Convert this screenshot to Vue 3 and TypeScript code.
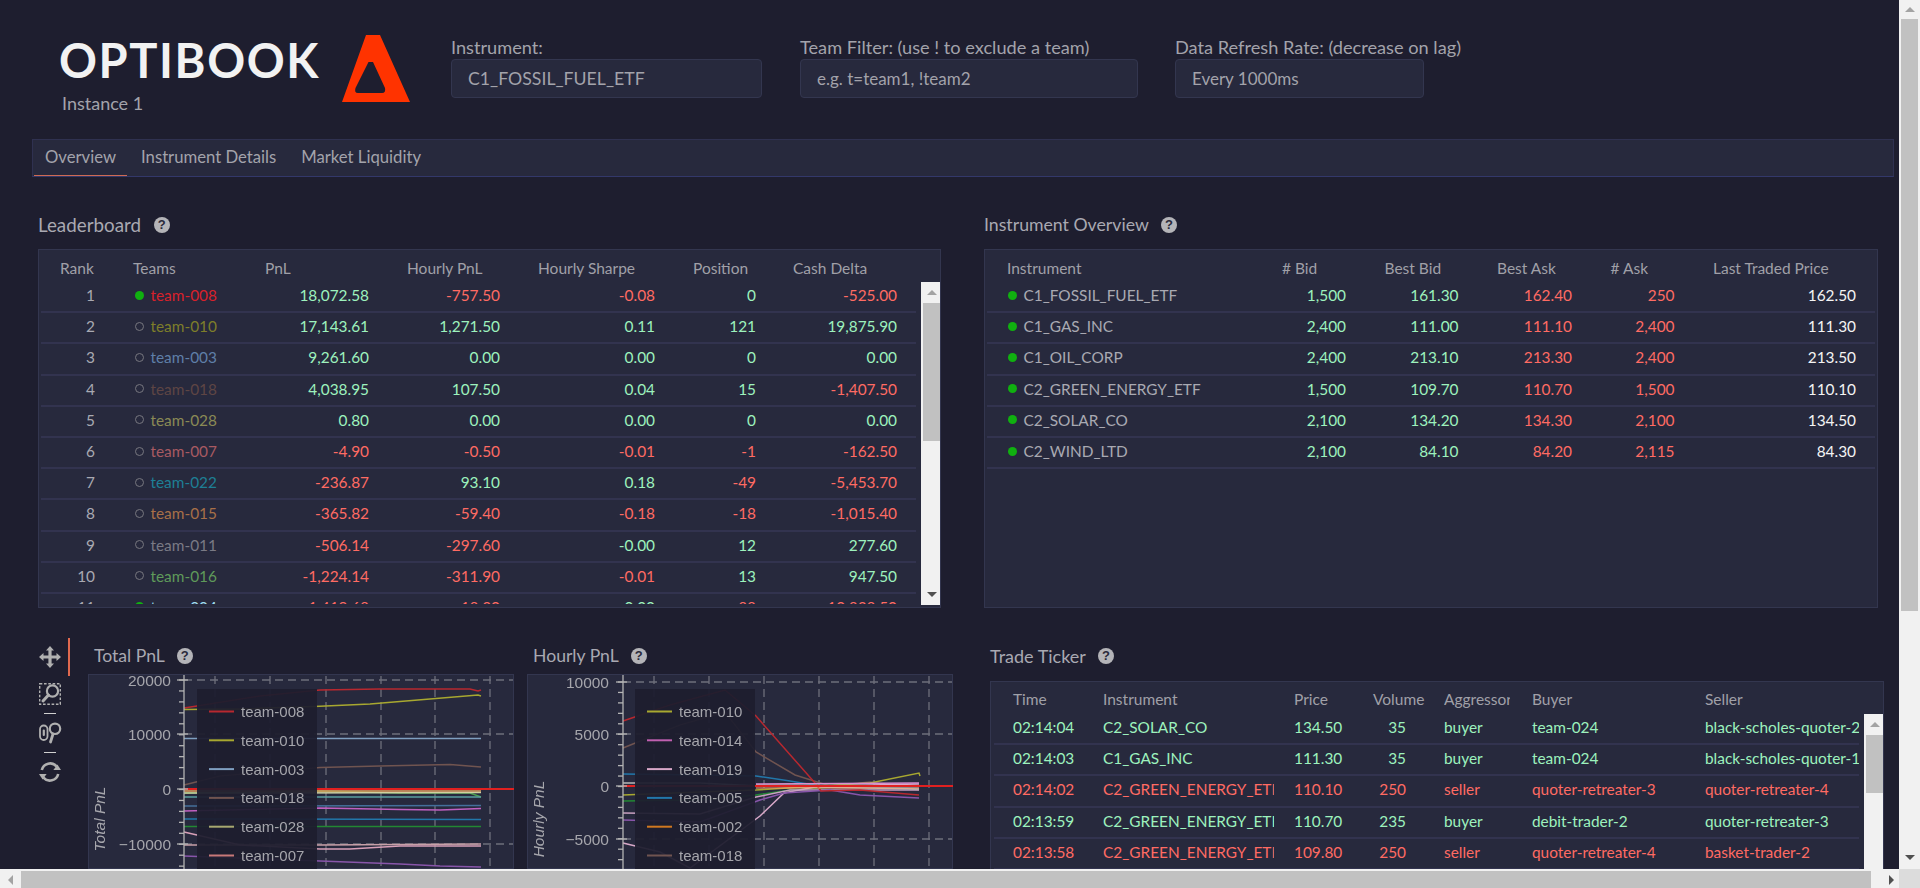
<script setup lang="ts">
interface Series { c: string; p: string; w?: number }
interface Chart {
  title: string; axis: string; x0: number; axisX: number; endX: number; labelX: number;
  ticks: { y: number; t: string }[]; minorStep: number; minorStart: number;
  vx: number[]; legendX: number; legend: { c: string; t: string }[]; series: Series[];
}

const isNeg = (v: string) => parseFloat(v.replace(/,/g, '')) < 0
const tone = (v: string) => (isNeg(v) ? 'neg' : 'pos')

const teams = [
  { r: 1, t: 'team-008', c: '#d8212b', on: true, v: ['18,072.58', '-757.50', '-0.08', '0', '-525.00'] },
  { r: 2, t: 'team-010', c: '#7e7e2a', on: false, v: ['17,143.61', '1,271.50', '0.11', '121', '19,875.90'] },
  { r: 3, t: 'team-003', c: '#5f7fa8', on: false, v: ['9,261.60', '0.00', '0.00', '0', '0.00'] },
  { r: 4, t: 'team-018', c: '#5e4544', on: false, v: ['4,038.95', '107.50', '0.04', '15', '-1,407.50'] },
  { r: 5, t: 'team-028', c: '#8a8a55', on: false, v: ['0.80', '0.00', '0.00', '0', '0.00'] },
  { r: 6, t: 'team-007', c: '#a85a62', on: false, v: ['-4.90', '-0.50', '-0.01', '-1', '-162.50'] },
  { r: 7, t: 'team-022', c: '#1e7f95', on: false, v: ['-236.87', '93.10', '0.18', '-49', '-5,453.70'] },
  { r: 8, t: 'team-015', c: '#a87048', on: false, v: ['-365.82', '-59.40', '-0.18', '-18', '-1,015.40'] },
  { r: 9, t: 'team-011', c: '#7a7a85', on: false, v: ['-506.14', '-297.60', '-0.00', '12', '277.60'] },
  { r: 10, t: 'team-016', c: '#5f9a5a', on: false, v: ['-1,224.14', '-311.90', '-0.01', '13', '947.50'] },
  { r: 11, t: 'team-004', c: '#9fdcf0', on: true, v: ['-1,419.68', '-18.30', '0.00', '-88', '-10,838.50'] },
]
const leaderHead = ['Rank', 'Teams', 'PnL', 'Hourly PnL', 'Hourly Sharpe', 'Position', 'Cash Delta']

const instruments = [
  ['C1_FOSSIL_FUEL_ETF', '1,500', '161.30', '162.40', '250', '162.50'],
  ['C1_GAS_INC', '2,400', '111.00', '111.10', '2,400', '111.30'],
  ['C1_OIL_CORP', '2,400', '213.10', '213.30', '2,400', '213.50'],
  ['C2_GREEN_ENERGY_ETF', '1,500', '109.70', '110.70', '1,500', '110.10'],
  ['C2_SOLAR_CO', '2,100', '134.20', '134.30', '2,100', '134.50'],
  ['C2_WIND_LTD', '2,100', '84.10', '84.20', '2,115', '84.30'],
]
const overviewHead = ['Instrument', '# Bid', 'Best Bid', 'Best Ask', '# Ask', 'Last Traded Price']

const trades = [
  ['02:14:04', 'C2_SOLAR_CO', '134.50', '35', 'buyer', 'team-024', 'black-scholes-quoter-2'],
  ['02:14:03', 'C1_GAS_INC', '111.30', '35', 'buyer', 'team-024', 'black-scholes-quoter-1'],
  ['02:14:02', 'C2_GREEN_ENERGY_ETF', '110.10', '250', 'seller', 'quoter-retreater-3', 'quoter-retreater-4'],
  ['02:13:59', 'C2_GREEN_ENERGY_ETF', '110.70', '235', 'buyer', 'debit-trader-2', 'quoter-retreater-3'],
  ['02:13:58', 'C2_GREEN_ENERGY_ETF', '109.80', '250', 'seller', 'quoter-retreater-4', 'basket-trader-2'],
]
const tradeHead = ['Time', 'Instrument', 'Price', 'Volume', 'Aggressor', 'Buyer', 'Seller']

const charts: Chart[] = [
  {
    title: 'Total PnL', axis: 'Total PnL', x0: 88, axisX: 184, endX: 514, labelX: 171,
    ticks: [{ y: 680, t: '20000' }, { y: 734, t: '10000' }, { y: 789, t: '0' }, { y: 844, t: '\u221210000' }],
    minorStep: 10.95, minorStart: 680,
    vx: [215, 270, 326, 381, 435, 490], legendX: 197,
    legend: [
      { c: '#b8282f', t: 'team-008' }, { c: '#a8a830', t: 'team-010' }, { c: '#7f9fc0', t: 'team-003' },
      { c: '#705450', t: 'team-018' }, { c: '#a8a870', t: 'team-028' }, { c: '#c87878', t: 'team-007' },
    ],
    series: [
      { c: '#b8282f', p: '184,708 197,706 260,696 320,690 380,689 470,689 478,691 481,690' },
      { c: '#a8a830', p: '184,709.5 240,709 320,706.3 370,704 430,699 478,695 481,696' },
      { c: '#7f9fc0', p: '184,738.5 481,738.5' },
      { c: '#705450', p: '184,785 220,776 320,767.6 380,766 450,764.5 481,767' },
      { c: '#4da050', p: '184,793 320,791 400,793 470,793 481,797' },
      { c: '#5aa0a0', p: '184,797 481,797' },
      { c: '#e8a060', p: '184,791 481,791' },
      { c: '#d0d0a0', p: '184,793 481,792.5' },
      { c: '#e02020', p: '184,789 514,789', w: 2.2 },
      { c: '#446f9a', p: '184,806 481,805.5' },
      { c: '#c060c0', p: '184,811 320,808 400,809.5 440,810 481,808.5' },
      { c: '#2277aa', p: '184,819 481,819.5' },
      { c: '#228833', p: '184,826.5 481,826.5' },
      { c: '#c8a0a8', p: '184,845 320,845 481,844' },
      { c: '#d8a0b8', p: '184,832 240,845 320,849 350,849 400,846 481,846' },
      { c: '#8855aa', p: '184,856 320,861 400,864 440,866 481,867' },
    ],
  },
  {
    title: 'Hourly PnL', axis: 'Hourly PnL', x0: 527, axisX: 623, endX: 953, labelX: 609,
    ticks: [{ y: 682, t: '10000' }, { y: 734, t: '5000' }, { y: 786, t: '0' }, { y: 839, t: '\u22125000' }],
    minorStep: 10.45, minorStart: 682,
    vx: [654, 709, 764, 819, 874, 929], legendX: 635,
    legend: [
      { c: '#a8a830', t: 'team-010' }, { c: '#c060b0', t: 'team-014' }, { c: '#d8a8c8', t: 'team-019' },
      { c: '#2277aa', t: 'team-005' }, { c: '#d07820', t: 'team-002' }, { c: '#705450', t: 'team-018' },
    ],
    series: [
      { c: '#705450', p: '623,748 680,725 725,712 756,752 795,775 830,786 870,782 919,790' },
      { c: '#2277aa', p: '623,774 700,775 756,776 790,781 820,786 919,788' },
      { c: '#a8a830', p: '623,795 700,792 756,790 820,786 870,783 919,773 920,776' },
      { c: '#228833', p: '623,801 700,800 756,795 790,790 850,786 919,786' },
      { c: '#d8a8c8', p: '623,843 660,852 690,868 760,816 784,793 820,786 919,784' },
      { c: '#c8a0c0', p: '623,813 700,814 756,797 790,790 919,790' },
      { c: '#8855aa', p: '623,820 700,822 760,800 784,793 830,790 860,795 919,798' },
      { c: '#b8b8b8', p: '623,783 700,783 760,786 919,789' },
      { c: '#b8282f', p: '623,721 670,705 725,690 756,716 815,783 821,791 860,790 919,795' },
      { c: '#7ec88a', p: '756,785 919,786' },
      { c: '#d890d0', p: '756,784 919,783' },
      { c: '#ffa070', p: '756,788 919,788', w: 1.2 },
      { c: '#e02020', p: '623,786 953,786', w: 2.2 },
    ],
  },
]

const minors = (c: Chart) => {
  const out: number[] = []
  for (let y = c.minorStart; y < 869; y += c.minorStep) out.push(y)
  return out
}
</script>

<template>
  <div class="page">
    <header class="top">
      <div class="brand">
        <div class="brand-text">
          <div class="logo-word">OPTIBOOK</div>
          <div class="instance">Instance 1</div>
        </div>
        <svg class="logo-mark" width="68" height="68" viewBox="0 0 68 68">
          <path fill="#ff3300" fill-rule="evenodd" d="M24 0 H38 L68 67 H0 Z M26.5 27 L13.5 53 Q12 58 16 58 H40 Q44 58 43 53 L31 27 Z" />
        </svg>
      </div>
      <div class="field f1">
        <div class="field-label">Instrument:</div>
        <div class="field-input wide">C1_FOSSIL_FUEL_ETF</div>
      </div>
      <div class="field f2">
        <div class="field-label">Team Filter: (use ! to exclude a team)</div>
        <div class="field-input">e.g. t=team1, !team2</div>
      </div>
      <div class="field f3">
        <div class="field-label">Data Refresh Rate: (decrease on lag)</div>
        <div class="field-input">Every 1000ms</div>
      </div>
    </header>

    <nav class="tabs">
      <div class="tab active">Overview</div>
      <div class="tab">Instrument Details</div>
      <div class="tab">Market Liquidity</div>
    </nav>

    <section class="row-one">
      <div class="block leader-block">
        <h2 class="block-title leader-title">Leaderboard <span class="help">?</span></h2>
        <div class="panel">
          <div class="grid-row head leader-cols">
            <div v-for="h in leaderHead" :key="h">{{ h }}</div>
          </div>
          <div class="body">
            <div class="rows leader-rows">
              <div v-for="t in teams" :key="t.r" class="grid-row line leader-cols">
                <div class="num muted">{{ t.r }}</div>
                <div class="team">
                  <i class="dot" :class="{ off: !t.on }"></i>
                  <span :style="{ color: t.c }">{{ t.t }}</span>
                </div>
                <div v-for="(v, i) in t.v" :key="i" class="num" :class="tone(v)">{{ v }}</div>
              </div>
            </div>
            <div class="sb">
              <div class="sb-btn"><i class="up"></i></div>
              <div class="sb-thumb leader-thumb"></div>
              <div class="sb-fill"></div>
              <div class="sb-btn"><i class="down"></i></div>
            </div>
          </div>
        </div>
      </div>

      <div class="block overview-block">
        <h2 class="block-title overview-title">Instrument Overview <span class="help">?</span></h2>
        <div class="panel">
          <div class="grid-row head overview-cols">
            <div v-for="h in overviewHead" :key="h">{{ h }}</div>
          </div>
          <div class="rows overview-rows">
            <div v-for="r in instruments" :key="r[0]" class="grid-row line overview-cols">
              <div class="team inst">
                <i class="dot"></i>
                <span class="muted">{{ r[0] }}</span>
              </div>
              <div class="num pos">{{ r[1] }}</div>
              <div class="num pos">{{ r[2] }}</div>
              <div class="num neg">{{ r[3] }}</div>
              <div class="num neg">{{ r[4] }}</div>
              <div class="num last">{{ r[5] }}</div>
            </div>
          </div>
        </div>
      </div>
    </section>

    <section class="row-two">
      <div class="tools">
        <div class="tool active">
          <svg width="22" height="22" viewBox="0 0 22 22"><path fill="#b0b0b0" d="M11 0 L15 4.5 H12.6 V9.4 H17.5 V7 L22 11 L17.5 15 V12.6 H12.6 V17.5 H15 L11 22 L7 17.5 H9.4 V12.6 H4.5 V15 L0 11 L4.5 7 V9.4 H9.4 V4.5 H7 Z" /></svg>
        </div>
        <div class="tool t2">
          <svg width="22" height="22" viewBox="0 0 22 22">
            <rect x="0.7" y="0.7" width="20.6" height="20.6" fill="none" stroke="#b0b0b0" stroke-width="1.4" stroke-dasharray="2.6 1.7" />
            <circle cx="13.5" cy="8" r="5.6" fill="#1e1e2f" stroke="#b0b0b0" stroke-width="2.2" />
            <path d="M9.5 12 L4 18" stroke="#b0b0b0" stroke-width="3" stroke-linecap="round" />
          </svg>
        </div>
        <div class="sep"></div>
        <div class="tool t3">
          <svg width="23" height="22" viewBox="0 0 23 22">
            <rect x="1" y="3.5" width="7.5" height="14.5" rx="3.7" fill="none" stroke="#b0b0b0" stroke-width="1.8" />
            <rect x="3.7" y="7.5" width="2.2" height="6.5" rx="1" fill="#b0b0b0" />
            <circle cx="16" cy="6.8" r="5.2" fill="none" stroke="#b0b0b0" stroke-width="2.2" />
            <path d="M14 12 L11.5 20" stroke="#b0b0b0" stroke-width="2.8" stroke-linecap="round" />
          </svg>
        </div>
        <div class="sep"></div>
        <div class="tool t3">
          <svg width="22" height="22" viewBox="0 0 22 22" fill="none" stroke="#b0b0b0" stroke-width="2.6">
            <path d="M2.8 9 A8.5 8.5 0 0 1 17.6 5.5" />
            <path d="M19.2 13 A8.5 8.5 0 0 1 4.4 16.5" />
            <path d="M14.4 9 H22 L18.4 3.6 Z" fill="#b0b0b0" stroke="none" />
            <path d="M0 13 H7.6 L3.6 18.4 Z" fill="#b0b0b0" stroke="none" />
          </svg>
        </div>
      </div>

      <div v-for="c in charts" :key="c.title" class="chart-block">
        <h2 class="block-title chart-title">{{ c.title }} <span class="help">?</span></h2>
        <div class="chart-panel">
          <svg class="chart" width="426" height="195" :viewBox="`${c.x0} 674 426 195`">
            <g stroke="#6e6f7b" stroke-width="1.3" stroke-dasharray="8 5" fill="none">
              <line v-for="x in c.vx" :key="x" :x1="x" y1="676" :x2="x" y2="869" />
              <line v-for="t in c.ticks" :key="t.y" :x1="c.axisX" :y1="t.y" :x2="c.endX - 1" :y2="t.y" />
            </g>
            <polyline v-for="s in c.series" :key="s.p" :points="s.p" fill="none" :stroke="s.c" :stroke-width="s.w || 1.5" />
            <g stroke="#b4b4b4" stroke-width="1.3">
              <line :x1="c.axisX" y1="675" :x2="c.axisX" y2="869" />
              <line v-for="y in minors(c)" :key="y" :x1="c.axisX - 5" :y1="y" :x2="c.axisX" :y2="y" />
              <line v-for="t in c.ticks" :key="'m' + t.y" :x1="c.axisX - 7" :y1="t.y" :x2="c.axisX + 4" :y2="t.y" />
            </g>
            <g class="tick-text" text-anchor="end">
              <text v-for="t in c.ticks" :key="'t' + t.y" :x="c.labelX" :y="t.y + 6">{{ t.t }}</text>
            </g>
            <text class="axis-text" text-anchor="middle" :transform="`translate(${c.x0 + 17} 819) rotate(-90)`">{{ c.axis }}</text>
            <rect :x="c.legendX" y="689" width="120" height="180" fill="#1e1e2f" fill-opacity="0.94" />
            <g v-for="(l, i) in c.legend" :key="l.t">
              <line :x1="c.legendX + 12" :y1="711.5 + i * 28.8" :x2="c.legendX + 37" :y2="711.5 + i * 28.8" :stroke="l.c" stroke-width="2" />
              <text class="legend-text" :x="c.legendX + 44" :y="717 + i * 28.8">{{ l.t }}</text>
            </g>
          </svg>
        </div>
      </div>

      <div class="block ticker-block">
        <h2 class="block-title">Trade Ticker <span class="help">?</span></h2>
        <div class="panel ticker-panel">
          <div class="grid-row head ticker-cols">
            <div v-for="h in tradeHead" :key="h" :class="{ clip: h === 'Aggressor' }">{{ h }}</div>
          </div>
          <div class="body">
            <div class="rows ticker-rows">
              <div v-for="r in trades" :key="r[0]" class="grid-row line ticker-cols" :class="r[4] === 'buyer' ? 'pos' : 'neg'">
                <div>{{ r[0] }}</div>
                <div class="clip">{{ r[1] }}</div>
                <div>{{ r[2] }}</div>
                <div class="vol">{{ r[3] }}</div>
                <div>{{ r[4] }}</div>
                <div>{{ r[5] }}</div>
                <div>{{ r[6] }}</div>
              </div>
            </div>
            <div class="sb ticker-sb">
              <div class="sb-btn"><i class="up"></i></div>
              <div class="sb-thumb ticker-thumb"></div>
              <div class="sb-fill"></div>
            </div>
          </div>
        </div>
      </div>
    </section>

    <div class="page-v">
      <div class="pv-btn"><i class="up"></i></div>
      <div class="pv-thumb"></div>
      <div class="pv-fill"></div>
      <div class="pv-btn"><i class="down"></i></div>
    </div>
    <div class="page-h">
      <div class="ph-btn"><i class="left"></i></div>
      <div class="ph-thumb"></div>
      <div class="ph-btn end"><i class="right"></i></div>
      <div class="ph-corner"></div>
    </div>
  </div>
</template>

<style>
html, body { margin: 0; background: #1e1e2f; overflow: hidden; }
</style>

<style scoped>
.page {
  position: relative;
  width: 1920px;
  height: 888px;
  overflow: hidden;
  background: #1e1e2f;
  font-family: Lato, "Liberation Sans", sans-serif;
  color: #a9a9b2;
}
.top { display: flex; height: 139px; box-sizing: border-box; padding: 35px 0 0 59px; }
.brand { display: flex; width: 392px; }
.brand-text { width: 283px; }
.logo-word {
  font-size: 47px; line-height: 46px; font-weight: 700; color: #f2f2f2;
  letter-spacing: 1.6px; margin-top: 2px; white-space: nowrap;
}
.instance { font-size: 18px; line-height: 22px; margin: 9px 0 0 3px; color: #a3a3ab; }
.logo-mark { display: block; flex: none; }
.f1 { width: 311px; margin-right: 38px; }
.f2 { width: 338px; margin-right: 37px; }
.f3 { width: 249px; }
.field-label { font-size: 18.2px; line-height: 24px; white-space: nowrap; color: #a3a3ab; }
.field-input {
  box-sizing: border-box; height: 39px; padding: 0 16px;
  background: #27293d; border: 1px solid #33364f; border-radius: 4px;
  font-size: 17px; line-height: 37px; color: #a3a3ab;
}
.field-input.wide { font-size: 17.7px; }
.tabs {
  display: flex; gap: 3px; box-sizing: border-box; width: 1862px; height: 38px; margin-left: 32px;
  padding-left: 1px; background: #27293d; border: 1px solid #2f3150; border-bottom-color: #33386a;
}
.tab { padding: 0 11px; font-size: 16.7px; line-height: 34px; color: #a3a3ab; height: 36px; box-sizing: border-box; }
.tab.active { border-bottom: 1px solid #cf6a53; }

.row-one { display: flex; margin: 37px 0 0 38px; }
.block-title {
  margin: 0; font-size: 18px; font-weight: 400; line-height: 22px; height: 24px; padding-bottom: 2px; box-sizing: border-box;
  color: #a9a9b2; display: flex; align-items: center; white-space: pre;
}
.leader-title { font-size: 18.8px; }
.overview-title { font-size: 17.7px; }
.help {
  display: inline-block; width: 16px; height: 16px; border-radius: 50%; background: #b4b4b8;
  color: #2a2a3a; font: 700 13px/16px "Liberation Sans", sans-serif; text-align: center; margin-left: 8px;
}
.leader-block { width: 903px; margin-right: 43px; }
.overview-block { width: 894px; }
.panel {
  box-sizing: border-box; margin-top: 11px; height: 359px; background: #27293d; border: 1px solid #33364f;
  overflow: hidden;
}
.grid-row { display: grid; align-items: center; white-space: nowrap; }
.head { height: 32px; font-size: 15.5px; color: #a0a0a8; line-height: 36px; }
.line { height: 31.2px; box-sizing: border-box; border-bottom: 2px solid #32334f; padding-bottom: 3px; font-size: 15.4px; }
.leader-cols {
  grid-template-columns: 35px 94px 104px 93px 117px 63px 103px; column-gap: 38px; padding-left: 21px;
}
.leader-cols.head > :last-child { margin-left: -1px; }
.overview-cols {
  grid-template-columns: 236.5px 64px 74px 75px 64px 143px; column-gap: 38.5px; padding-left: 22px;
}
.ticker-cols {
  grid-template-columns: 70px 171px 59px 51px 68px 153px 160px; column-gap: 20px; padding-left: 22px;
}
.ticker-cols.head { line-height: 34px; }
.ticker-cols.head .clip { width: 66px; }
.leader-rows { width: 875px; margin-left: 2px; height: 322px; overflow: hidden; }
.leader-rows .grid-row { padding-left: 19px; }
.overview-rows { margin: 0 2px; }
.overview-rows .grid-row { padding-left: 20px; }
.ticker-rows { width: 866px; margin-left: 3px; height: 190px; overflow: hidden; }
.ticker-rows .grid-row { padding-left: 19px; }
.body { display: flex; }
.num { text-align: right; }
.pos { color: #9df2bd; }
.neg { color: #ff6b63; }
.last { color: #f4f4f4; }
.muted { color: #a9a9b2; }
.team { display: flex; align-items: center; gap: 6.5px; padding-left: 2px; }
.inst { padding-left: 1px; }
.dot { display: block; width: 9px; height: 9px; border-radius: 50%; background: #10b010; box-sizing: border-box; flex: none; }
.dot.off { background: transparent; border: 1.5px solid #77777f; }
.clip { overflow: hidden; }
.vol { text-align: right; padding-right: 18px; }

.sb {
  width: 19px; height: 323px; margin-left: 5px; background: #f1f1f1; display: flex; flex-direction: column;
}
.sb-btn { height: 21px; flex: none; display: flex; align-items: center; justify-content: center; padding-left: 2px; }
.sb-thumb { width: 17px; margin-left: 2px; background: #c1c1c1; flex: none; }
.leader-thumb { height: 138px; }
.ticker-thumb { height: 58px; }
.sb-fill { flex: 1; }
.up, .down, .left, .right { display: block; width: 0; height: 0; border-style: solid; border-color: transparent; }
.up { border-width: 0 5px 5px; border-bottom-color: #a3a3a3; }
.down { border-width: 5px 5px 0; border-top-color: #505050; }
.left { border-width: 5px 5px 5px 0; border-right-color: #a3a3a3; }
.right { border-width: 5px 0 5px 5px; border-left-color: #505050; }

.row-two { display: flex; margin: 30px 0 0 38px; height: 231px; }
.tools { width: 50px; flex: none; }
.tool { width: 29px; height: 22px; display: flex; align-items: center; margin-left: 1px; }
.tool.active { height: 38px; border-right: 2px solid #e0694f; }
.tool.t2 { margin-top: 7px; }
.tool.t3 { margin-top: 8px; }
.sep { width: 12px; height: 1.5px; margin: 7.5px 0 0 6px; background: #d0d0d0; }
.chart-block { width: 426px; margin-right: 13px; flex: none; }
.chart-title { margin-top: 7px; padding-left: 6px; font-size: 17.6px; }
.chart-panel {
  margin-top: 5px; width: 426px; height: 195px; background: #27293d; outline: 1px solid #33364f; outline-offset: -1px;
}
.chart { display: block; filter: blur(0.35px); }
.tick-text text { font: 15.5px "Liberation Sans", sans-serif; fill: #a6a6ac; }
.axis-text { font: italic 15.5px "Liberation Sans", sans-serif; fill: #a6a6ac; }
.legend-text { font: 15px "Liberation Sans", sans-serif; fill: #a6a6ac; }

.ticker-block { width: 894px; margin-left: 24px; flex: none; margin-top: 7px; }
.ticker-panel { margin-top: 12px; height: 210px; }
.ticker-sb { height: 190px; }

.page-v {
  position: absolute; left: 1899px; top: 0; width: 21px; height: 888px; background: #f1f1f1;
  display: flex; flex-direction: column;
}
.pv-btn { height: 19px; display: flex; align-items: center; justify-content: center; flex: none; }
.pv-thumb { height: 592px; width: 17px; margin-left: 2px; background: #c1c1c1; flex: none; }
.pv-fill { flex: 1; }
.page-v .pv-btn:last-child { margin-bottom: 21px; }
.page-h {
  position: absolute; left: 0; top: 869px; width: 1920px; height: 19px; background: #f1f1f1;
  display: flex; padding-top: 2px; box-sizing: border-box;
}
.ph-btn { width: 21px; display: flex; align-items: center; justify-content: center; flex: none; }
.ph-thumb { width: 1850px; background: #c1c1c1; flex: none; }
.ph-btn.end { width: 28px; justify-content: flex-end; padding-right: 5px; box-sizing: border-box; }
.ph-corner { flex: 1; background: #dcdcdc; margin-top: -2px; }
</style>
